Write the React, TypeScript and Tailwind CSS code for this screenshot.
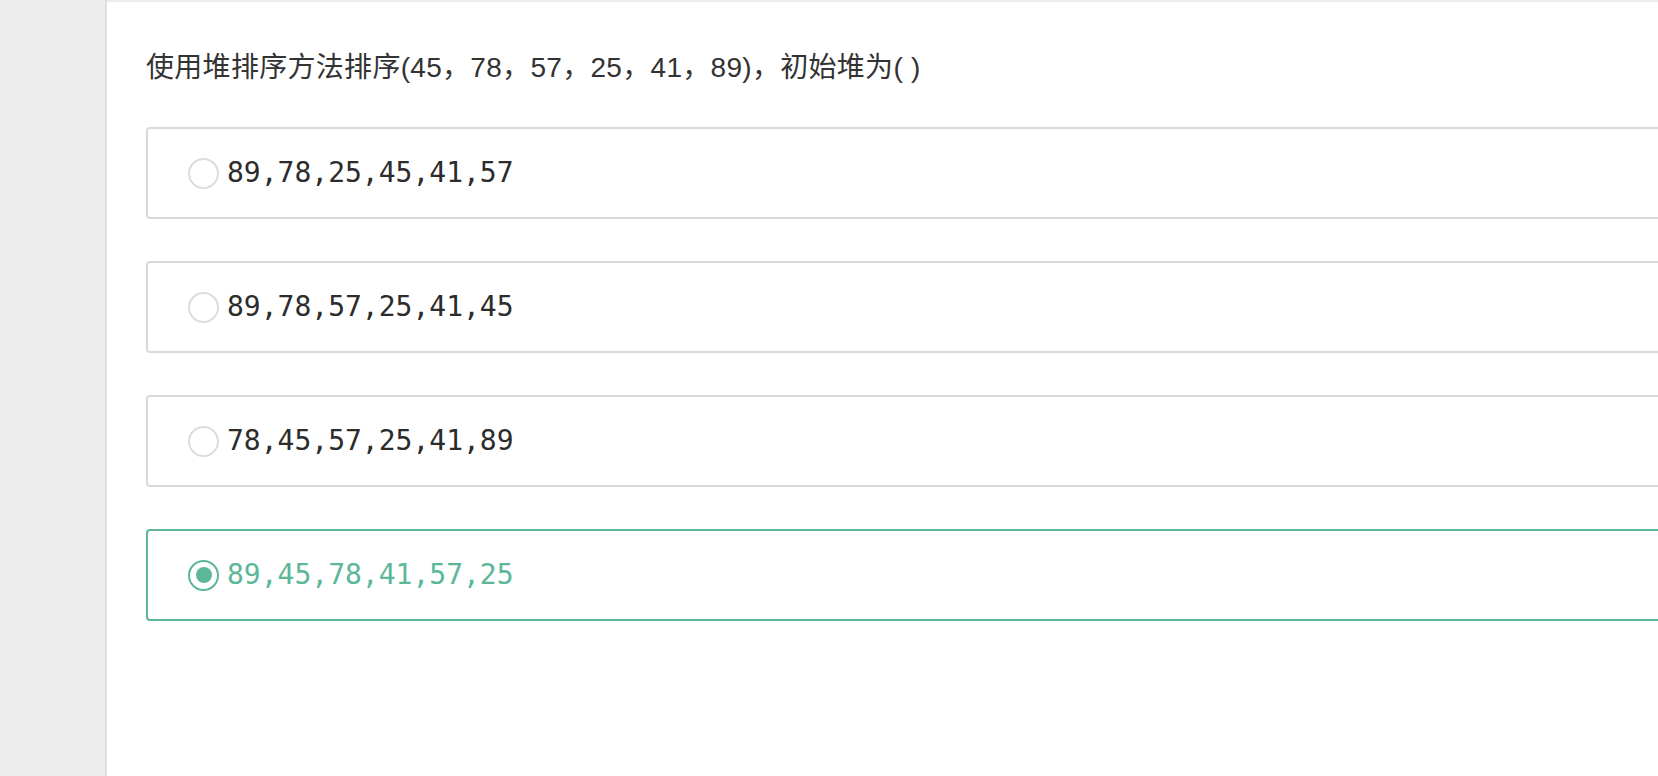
import { useState } from 'react';

const options = [
  '89,78,25,45,41,57',
  '89,78,57,25,41,45',
  '78,45,57,25,41,89',
  '89,45,78,41,57,25',
];

export default function App() {
  const [selected, setSelected] = useState(3);

  return (
    <div className="flex h-[776px] w-[1658px] overflow-hidden bg-[#ededed]">
      <aside className="w-[107px] shrink-0 border-r-2 border-[#e0e0e0] bg-[#ededed]" />
      <main className="mt-[2px] min-w-0 flex-1 overflow-hidden bg-white">
        <div className="pl-[39px] pt-[46px]">
          <h1
            className="text-[28px] leading-[40px] tracking-[0.3px] text-[#333] whitespace-nowrap"
            style={{ fontFamily: '"Liberation Sans", "Noto Sans CJK SC", sans-serif' }}
          >
            使用堆排序方法排序(45，78，57，25，41，89)，初始堆为( )
          </h1>

          <div className="mt-[39px] flex flex-col gap-[42px]">
            {options.map((opt, i) => {
              const active = selected === i;
              return (
                <button
                  key={opt}
                  onClick={() => setSelected(i)}
                  className={`flex h-[92px] w-[1600px] items-center rounded-[4px] border-2 pl-[40px] text-left ${
                    active ? 'border-[#5bb798]' : 'border-[#d9d9d9]'
                  }`}
                >
                  <span
                    className={`flex h-[31px] w-[31px] shrink-0 items-center justify-center rounded-full border-2 ${
                      active ? 'border-[#5bb798]' : 'border-[#dcdcdc]'
                    }`}
                  >
                    {active && <span className="h-[16px] w-[16px] rounded-full bg-[#5bb798]" />}
                  </span>
                  <span
                    className={`ml-[8px] text-[28px] leading-none ${active ? 'text-[#5bb798]' : 'text-[#2c2c2c]'}`}
                    style={{ fontFamily: '"DejaVu Sans Mono", "Liberation Mono", monospace' }}
                  >
                    {opt}
                  </span>
                </button>
              );
            })}
          </div>
        </div>
      </main>
    </div>
  );
}
